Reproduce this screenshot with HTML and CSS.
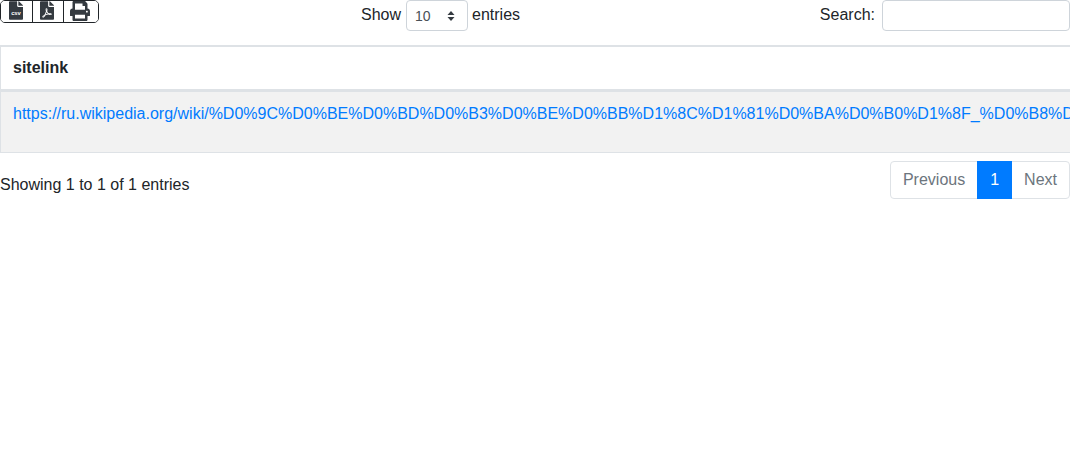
FILE: index.html
```html
<!DOCTYPE html>
<html lang="en">
<head>
    <meta charset="UTF-8">
    <title>sitelink</title>
    <link rel="stylesheet" href="styles.css">
</head>
<body>
    <div class="wrapper">
        <div class="top-row">
            <div class="buttons">
                <button class="export export-csv" title="CSV">
                    <svg class="icon-file" viewBox="0 0 384 512"><path d="M224 136V0H24C10.7 0 0 10.7 0 24v464c0 13.3 10.7 24 24 24h336c13.3 0 24-10.7 24-24V160H248c-13.2 0-24-10.8-24-24z"/><path d="M377 105L279.1 7c-4.5-4.5-10.6-7-17-7H256v128h128v-6.1c0-6.3-2.5-12.4-7-16.9z"/><text x="192" y="385" class="csv-label">csv</text></svg>
                </button>
                <button class="export export-pdf" title="PDF">
                    <svg class="icon-file" viewBox="0 0 384 512"><path d="M181.9 256.1c-5-16-4.9-46.9-2-46.9 8.4 0 7.6 36.9 2 46.9zm-1.7 47.2c-7.7 20.2-17.3 43.3-28.4 62.7 18.3-7 39-17.2 62.9-21.9-12.7-9.6-24.9-23.4-34.5-40.8zM86.1 428.1c0 .8 13.2-5.4 34.9-40.2-6.7 6.3-29.1 24.5-34.9 40.2zM248 160h136v328c0 13.3-10.7 24-24 24H24c-13.3 0-24-10.7-24-24V24C0 10.7 10.7 0 24 0h200v136c0 13.2 10.8 24 24 24zm-8 171.8c-20-12.2-33.3-29-42.7-53.8 4.5-18.5 11.6-46.6 6.2-64.2-4.7-29.4-42.4-26.5-47.8-6.8-5 18.3-.4 44.1 8.1 77-11.6 27.6-28.7 64.6-40.8 85.8-.1 0-.1.1-.2.1-27.1 13.9-73.6 44.5-54.5 68 5.6 6.9 16 10 21.5 10 17.9 0 35.7-18 61.1-61.8 25.8-8.5 54.1-19.1 79-23.2 21.7 11.8 47.1 19.5 64 19.5 29.2 0 31.2-32 19.7-43.4-13.9-13.6-54.3-9.7-73.6-7.2zM377 105L279 7c-4.5-4.5-10.6-7-17-7h-6v128h128v-6.1c0-6.3-2.5-12.4-7-16.9zm-74.1 255.3c4.1-2.7-2.5-11.9-42.8-9 37.1 15.8 42.8 9 42.8 9z"/></svg>
                </button>
                <button class="export export-print" title="Print">
                    <svg class="icon-print" viewBox="0 0 512 512"><path d="M448 192V77.25c0-8.49-3.37-16.62-9.37-22.63L393.37 9.37c-6-6-14.14-9.37-22.63-9.37H96C78.33 0 64 14.33 64 32v160c-35.35 0-64 28.65-64 64v112c0 8.84 7.16 16 16 16h48v96c0 17.67 14.33 32 32 32h320c17.67 0 32-14.33 32-32v-96h48c8.84 0 16-7.16 16-16V256c0-35.35-28.65-64-64-64zm-64 256H128v-96h256v96zm0-224H128V64h192v48c0 8.84 7.16 16 16 16h48v96zm48 72c-13.25 0-24-10.75-24-24 0-13.26 10.75-24 24-24s24 10.74 24 24c0 13.25-10.75 24-24 24z"/></svg>
                </button>
            </div>
            <div class="length">
                <span>Show</span>
                <div class="select-box">
                    <span>10</span>
                    <svg class="arrows" viewBox="0 0 8 10"><path d="M4 0l3.5 4h-7zM4 10L.5 6h7z"/></svg>
                </div>
                <span>entries</span>
            </div>
            <div class="search">
                <span>Search:</span>
                <input type="search" class="search-input">
            </div>
        </div>

        <div class="table-box">
            <div class="head-cell">sitelink</div>
            <div class="body-cell">
                <a href="#">https://ru.wikipedia.org/wiki/%D0%9C%D0%BE%D0%BD%D0%B3%D0%BE%D0%BB%D1%8C%D1%81%D0%BA%D0%B0%D1%8F_%D0%B8%D0%BC%D0%BF%D0%B5%D1%80%D0%B8%D1%8F</a>
            </div>
        </div>

        <div class="bottom-row">
            <div class="info">Showing 1 to 1 of 1 entries</div>
            <div class="pagination">
                <a class="page" href="#">Previous</a>
                <a class="page active" href="#">1</a>
                <a class="page" href="#">Next</a>
            </div>
        </div>
    </div>
</body>
</html>
```

FILE: styles.css
```css
* {
    box-sizing: border-box;
}

body {
    margin: 0;
    background-color: #ffffff;
    color: #212529;
    font-family: "Liberation Sans", Arial, sans-serif;
    font-size: 16px;
    line-height: 24px;
    overflow: hidden;
}

.wrapper {
    width: 1070px;
    overflow: hidden;
}

/* Top controls */
.top-row {
    display: grid;
    grid-template-columns: 361px auto 1fr;
    height: 45px;
    align-items: start;
}

.buttons {
    display: flex;
    width: 99px;
    height: 23px;
    border: 1px solid #212529;
    border-radius: 5px;
    overflow: hidden;
}

.export {
    display: flex;
    justify-content: center;
    padding: 0 2px 0 0;
    height: 21px;
    border: none;
    border-right: 1px solid #212529;
    background: #ffffff;
}

.export-csv {
    width: 32px;
}

.export-pdf {
    width: 31px;
}

.export-print {
    flex: 1;
    border-right: none;
}

.export svg {
    fill: #343a40;
    display: block;
}

.icon-file {
    width: 14px;
    height: 19px;
}

.icon-print {
    width: 20px;
    height: 20px;
}

.csv-label {
    fill: #ffffff;
    font-size: 160px;
    font-weight: 700;
    text-anchor: middle;
}

.length {
    display: flex;
    line-height: 30px;
}

.select-box {
    display: flex;
    align-items: center;
    justify-content: space-between;
    width: 62px;
    height: 31px;
    margin: 0 4px 0 5px;
    padding: 0 12px 0 8px;
    border: 1px solid #ced4da;
    border-radius: 4px;
    color: #495057;
    font-size: 14px;
}

.arrows {
    width: 8px;
    height: 10px;
    fill: #343a40;
}

.search {
    display: flex;
    justify-content: flex-end;
    gap: 7px;
    line-height: 30px;
}

.search-input {
    width: 188px;
    height: 31px;
    border: 1px solid #ced4da;
    border-radius: 4px;
    background: #ffffff;
}

/* Table */
.table-box {
    width: 1100px;
}

.head-cell {
    height: 46px;
    padding: 9px 12px;
    border: 1px solid #dee2e6;
    border-top-width: 2px;
    border-bottom-width: 2px;
    font-weight: 700;
}

.body-cell {
    height: 62px;
    padding: 10px 12px 9px;
    border: 1px solid #dee2e6;
    background-color: #f2f2f2;
    white-space: nowrap;
}

.body-cell a {
    color: #007bff;
    text-decoration: none;
}

/* Info and paging */
.bottom-row {
    display: flex;
    justify-content: space-between;
    padding-top: 8px;
}

.info {
    padding-top: 12px;
}

.pagination {
    display: flex;
    height: 38px;
}

.page {
    padding: 6px 12px;
    border: 1px solid #dee2e6;
    margin-left: -1px;
    color: #6c757d;
    text-decoration: none;
    line-height: 24px;
}

.page:first-child {
    border-radius: 4px 0 0 4px;
}

.page:last-child {
    border-radius: 0 4px 4px 0;
}

.page.active {
    position: relative;
    z-index: 1;
    background-color: #007bff;
    border-color: #007bff;
    color: #ffffff;
}
```
